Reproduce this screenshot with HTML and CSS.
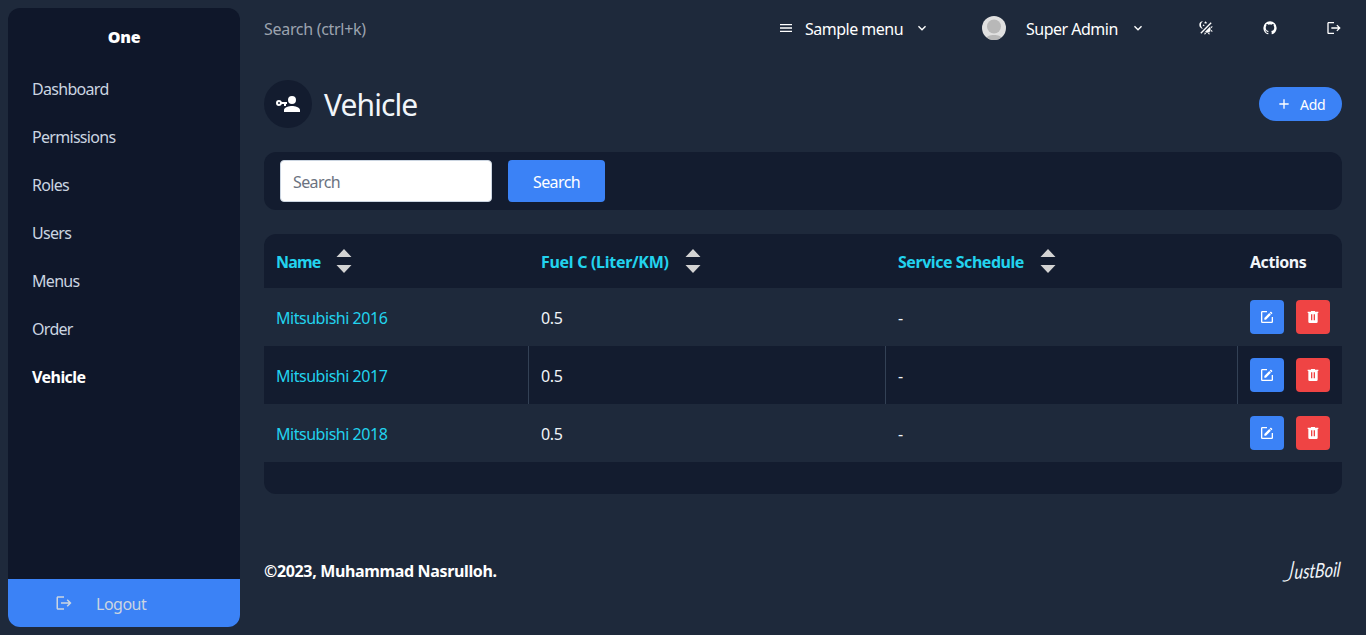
FILE: index.html
```html
<!DOCTYPE html>
<html lang="en">
<head>
<meta charset="utf-8">
<title>Vehicle</title>
<link rel="stylesheet" href="styles.css">
</head>
<body>
<svg class="defs" width="0" height="0" aria-hidden="true">
  <symbol id="menu" viewBox="0 0 24 24"><path d="M3,6H21V8H3V6M3,11H21V13H3V11M3,16H21V18H3V16Z"/></symbol>
  <symbol id="chevron" viewBox="0 0 24 24"><path d="M7.41,8.58L12,13.17L16.59,8.58L18,10L12,16L6,10L7.41,8.58Z"/></symbol>
  <symbol id="theme" viewBox="0 0 24 24"><path d="M7.5,2C5.71,3.15 4.5,5.18 4.5,7.5C4.5,9.82 5.71,11.85 7.53,13C4.46,13 2,10.54 2,7.5A5.5,5.5 0 0,1 7.5,2M19.07,3.5L20.5,4.93L4.93,20.5L3.5,19.07L19.07,3.5M12.89,5.93L11.41,5L9.97,6L10.39,4.3L9,3.24L10.75,3.12L11.33,1.47L12,3.1L13.73,3.13L12.38,4.26L12.89,5.93M9.59,9.54L8.43,8.81L7.31,9.59L7.65,8.27L6.56,7.44L7.92,7.35L8.37,6.06L8.88,7.33L10.24,7.36L9.19,8.23L9.59,9.54M19,13.5A5.5,5.5 0 0,1 13.5,19C12.28,19 11.15,18.6 10.24,17.93L17.93,10.24C18.6,11.15 19,12.28 19,13.5M14.6,20.08L17.37,18.93L17.13,22.28L14.6,20.08M18.93,17.38L20.08,14.61L22.28,17.15L18.93,17.38M20.08,12.42L18.94,9.64L22.28,9.88L20.08,12.42M9.63,18.93L12.4,20.08L9.87,22.27L9.63,18.93Z"/></symbol>
  <symbol id="github" viewBox="0 0 24 24"><path d="M12,2A10,10 0 0,0 2,12C2,16.42 4.87,20.17 8.84,21.5C9.34,21.58 9.5,21.27 9.5,21C9.5,20.77 9.5,20.14 9.5,19.31C6.73,19.91 6.14,17.97 6.14,17.97C5.68,16.81 5.03,16.5 5.03,16.5C4.12,15.88 5.1,15.9 5.1,15.9C6.1,15.97 6.63,16.93 6.63,16.93C7.5,18.45 8.97,18 9.54,17.76C9.63,17.11 9.89,16.67 10.17,16.42C7.95,16.17 5.62,15.31 5.62,11.5C5.62,10.39 6,9.5 6.65,8.79C6.55,8.54 6.2,7.5 6.75,6.15C6.75,6.15 7.59,5.88 9.5,7.17C10.29,6.95 11.15,6.84 12,6.84C12.85,6.84 13.71,6.95 14.5,7.17C16.41,5.88 17.25,6.15 17.25,6.15C17.8,7.5 17.45,8.54 17.35,8.79C18,9.5 18.38,10.39 18.38,11.5C18.38,15.32 16.04,16.16 13.81,16.41C14.17,16.72 14.5,17.33 14.5,18.26C14.5,19.6 14.5,20.68 14.5,21C14.5,21.27 14.66,21.59 15.17,21.5C19.14,20.16 22,16.42 22,12A10,10 0 0,0 12,2Z"/></symbol>
  <symbol id="logout" viewBox="0 0 24 24"><path d="M17 7L15.59 8.41L18.17 11H8V13H18.17L15.59 15.58L17 17L22 12M4 5H12V3H4C2.9 3 2 3.9 2 5V19C2 20.1 2.9 21 4 21H12V19H4V5Z"/></symbol>
  <symbol id="plus" viewBox="0 0 24 24"><path d="M19,13H13V19H11V13H5V11H11V5H13V11H19V13Z"/></symbol>
  <symbol id="account-key" viewBox="0 0 24 24"><path d="M11 10V12H10V14H8V12H5.83C5.42 13.17 4.31 14 3 14A3 3 0 0 1 0 11A3 3 0 0 1 3 8C4.31 8 5.42 8.83 5.83 10H11M3 10A1 1 0 0 0 2 11A1 1 0 0 0 3 12A1 1 0 0 0 4 11A1 1 0 0 0 3 10M16 14C18.67 14 24 15.34 24 18V20H8V18C8 15.34 13.33 14 16 14M16 12A4 4 0 0 1 12 8A4 4 0 0 1 16 4A4 4 0 0 1 20 8A4 4 0 0 1 16 12Z"/></symbol>
  <symbol id="edit" viewBox="0 0 24 24"><path d="M5,3C3.89,3 3,3.89 3,5V19A2,2 0 0,0 5,21H19A2,2 0 0,0 21,19V12H19V19H5V5H12V3H5M17.78,4C17.61,4 17.43,4.07 17.3,4.2L16.08,5.41L18.58,7.91L19.8,6.7C20.06,6.44 20.06,6 19.8,5.75L18.25,4.2C18.12,4.07 17.95,4 17.78,4M15.37,6.12L8,13.5V16H10.5L17.87,8.62L15.37,6.12Z"/></symbol>
  <symbol id="trash" viewBox="0 0 24 24"><path d="M9,3V4H4V6H5V19A2,2 0 0,0 7,21H17A2,2 0 0,0 19,19V6H20V4H15V3H9M9,8H11V17H9V8M13,8H15V17H13V8Z"/></symbol>
  <symbol id="sort" viewBox="0 0 16 24"><path d="M8 0L15.5 8H.5ZM.5 16H15.5L8 24Z"/></symbol>
</svg>
<div class="app">
  <aside class="sidebar">
    <div class="brand">One</div>
    <nav class="side-nav">
      <a>Dashboard</a>
      <a>Permissions</a>
      <a>Roles</a>
      <a>Users</a>
      <a>Menus</a>
      <a>Order</a>
      <a class="active">Vehicle</a>
    </nav>
    <a class="logout"><svg class="icon logout-icon"><use href="#logout"/></svg><span>Logout</span></a>
  </aside>
  <main class="main">
    <header class="topbar">
      <span class="quick-search">Search (ctrl+k)</span>
      <div class="menu-item sample"><svg class="icon"><use href="#menu"/></svg><span>Sample menu</span><svg class="icon"><use href="#chevron"/></svg></div>
      <div class="menu-item user">
        <svg class="avatar" viewBox="0 0 24 24"><clipPath id="round"><circle cx="12" cy="12" r="12"/></clipPath><g clip-path="url(#round)"><rect width="24" height="24" fill="#e0e0e0"/><ellipse cx="12" cy="10.5" rx="7" ry="7" fill="#b8b8b8"/><path d="M3 24C4 20 8 19 12 19S20 20 21 24Z" fill="#b8b8b8"/></g></svg>
        <span>Super Admin</span><svg class="icon"><use href="#chevron"/></svg>
      </div>
      <div class="shortcuts">
        <svg class="icon"><use href="#theme"/></svg>
        <svg class="icon"><use href="#github"/></svg>
        <svg class="icon"><use href="#logout"/></svg>
      </div>
    </header>
    <section class="title-row">
      <span class="title-icon"><svg><use href="#account-key"/></svg></span>
      <h1>Vehicle</h1>
      <button class="add"><svg class="icon"><use href="#plus"/></svg><span>Add</span></button>
    </section>
    <form class="search-card">
      <input type="text" placeholder="Search">
      <button type="button">Search</button>
    </form>
    <section class="table-card">
      <div class="row head">
        <div class="name">Name<svg class="sort"><use href="#sort"/></svg></div>
        <div>Fuel C (Liter/KM)<svg class="sort"><use href="#sort"/></svg></div>
        <div class="schedule">Service Schedule<svg class="sort"><use href="#sort"/></svg></div>
        <div class="plain">Actions</div>
      </div>
      <div class="row odd">
        <div class="link">Mitsubishi 2016</div><div>0.5</div><div>-</div>
        <div class="actions"><button class="edit"><svg class="icon"><use href="#edit"/></svg></button><button class="delete"><svg class="icon"><use href="#trash"/></svg></button></div>
      </div>
      <div class="row even">
        <div class="link">Mitsubishi 2017</div><div>0.5</div><div>-</div>
        <div class="actions"><button class="edit"><svg class="icon"><use href="#edit"/></svg></button><button class="delete"><svg class="icon"><use href="#trash"/></svg></button></div>
      </div>
      <div class="row odd">
        <div class="link">Mitsubishi 2018</div><div>0.5</div><div>-</div>
        <div class="actions"><button class="edit"><svg class="icon"><use href="#edit"/></svg></button><button class="delete"><svg class="icon"><use href="#trash"/></svg></button></div>
      </div>
    </section>
    <footer class="footer">
      <b>©2023, Muhammad Nasrulloh.</b>
      <svg class="signature" viewBox="0 0 62 32"><g transform="rotate(-3 31 16) skewX(-8)"><text class="initial" x="6" y="26" textLength="11" lengthAdjust="spacingAndGlyphs">J</text><text x="17" y="24" textLength="46" lengthAdjust="spacingAndGlyphs">ustBoil</text></g></svg>
    </footer>
  </main>
</div>
</body>
</html>
```

FILE: styles.css
```css
* { box-sizing: border-box; }
body {
  margin: 0;
  background: #1e293b;
  color: #f1f5f9;
  font: 16px/24px "Segoe UI", "Noto Sans", "Open Sans", sans-serif;
  letter-spacing: -0.3px;
  overflow: hidden;
}
.defs { position: absolute; }
svg { fill: currentColor; flex: none; display: block; }
.icon { width: 16px; height: 16px; }
button, input { font: inherit; letter-spacing: inherit; border: 0; margin: 0; }
.app { display: flex; height: 635px; }

.sidebar {
  display: flex;
  flex-direction: column;
  width: 232px;
  margin: 8px 0 8px 8px;
  border-radius: 12px;
  overflow: hidden;
  background: #0f172a;
}
.brand { height: 56px; padding-top: 17px; text-align: center; font-weight: 900; color: #fff; }
.side-nav { display: flex; flex-direction: column; flex: 1; letter-spacing: -0.7px; }
.side-nav a { height: 48px; padding: 13px 24px 11px; color: #cbd5e1; }
.side-nav .active { font-weight: 700; color: #fff; letter-spacing: -0.55px; }
.logout { display: flex; height: 48px; background: #3b82f6; color: #cbd5e1; letter-spacing: -0.5px; }
.logout-icon { width: 18px; height: 18px; margin: 15px 0 0 47px; }
.logout span { margin: 13px 0 0 23px; }

.main { flex: 1; padding: 0 24px; }
.topbar { display: flex; align-items: center; height: 56px; color: #fff; white-space: nowrap; }
.topbar span { padding-top: 2px; }
.quick-search { width: 514px; color: #9ca3af; }
.menu-item { display: flex; align-items: center; letter-spacing: -0.5px; }
.sample span { width: 98px; margin: 0 11px; }
.sample { width: 204px; }
.user span { width: 93px; margin: 0 11px 0 20px; }
.avatar { width: 24px; height: 24px; }
.shortcuts { display: flex; gap: 48px; margin-left: auto; }

.title-row { display: flex; align-items: center; height: 48px; margin-top: 24px; }
.title-icon { display: grid; place-items: center; width: 48px; height: 48px; border-radius: 50%; background: #131c2f; color: #fff; }
.title-icon svg { width: 24px; height: 24px; }
h1 { margin: 2px 0 0 12px; font-size: 30px; line-height: 36px; font-weight: 400; letter-spacing: -0.9px; }
.add { display: flex; align-items: center; gap: 8px; width: 83px; height: 34px; margin-left: auto; padding: 0 17px; border-radius: 17px; background: #3b82f6; color: #fff; font-size: 14px; }
.add span { padding-top: 2px; }

.search-card { display: flex; gap: 16px; height: 58px; margin-top: 24px; padding: 8px 16px; border-radius: 12px; background: #131c2f; letter-spacing: -0.6px; }
.search-card input { width: 212px; height: 42px; padding: 4px 12px 2px; border: 1px solid #cbd5e1; border-radius: 4px; background: #fff; }
.search-card input::placeholder { color: #6b7280; opacity: 1; }
.search-card button { width: 97px; height: 42px; padding: 2px 0 0; border-radius: 4px; background: #3b82f6; color: #fff; }

.table-card { height: 260px; margin-top: 24px; border-radius: 12px; overflow: hidden; background: #131c2f; }
.row { display: grid; grid-template-columns: 265px 357px 352px 104px; height: 58px; }
.row > div { display: flex; align-items: center; padding: 2px 12px 0; }
.head { height: 54px; font-weight: 700; color: #22d3ee; }
.head > .name { letter-spacing: -0.85px; }
.head > .schedule { letter-spacing: -0.46px; }
.head .plain { color: #f1f5f9; letter-spacing: -0.45px; }
.sort { width: 16px; height: 24px; margin: -2px 0 0 16px; color: #d3d3d3; }
.odd { background: #1e293b; }
.even > div:not(:first-child) { margin-left: -1px; border-left: 1px solid #334155; }
.row > .link { color: #22d3ee; letter-spacing: -0.47px; }
.row > .actions { gap: 12px; padding-top: 0; }
.actions button { display: grid; place-items: center; width: 34px; height: 34px; padding: 0; border-radius: 4px; color: #fff; }
.edit { background: #3b82f6; }
.delete { background: #ef4444; }

.footer { display: flex; align-items: center; justify-content: space-between; height: 32px; margin-top: 60px; }
.footer b { margin-top: 2px; color: #fff; letter-spacing: -0.35px; }
.signature { width: 62px; height: 32px; overflow: visible; }
.signature text { font: italic 400 20px Lato, sans-serif; letter-spacing: 0; }
.signature .initial { font-size: 28px; font-weight: 300; }
```
